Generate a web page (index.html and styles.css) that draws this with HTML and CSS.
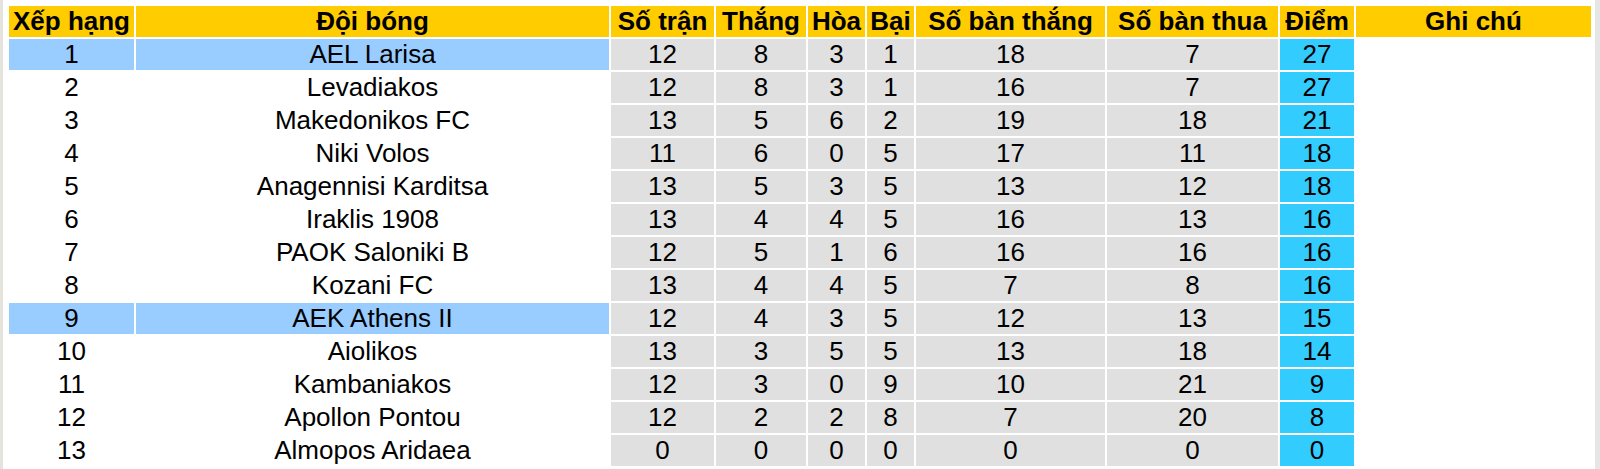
FILE: index.html
```html
<!DOCTYPE html>
<html lang="vi">
<head>
<meta charset="utf-8">
<title>Bảng xếp hạng</title>
<link rel="stylesheet" href="styles.css">
</head>
<body>
<div class="frame">
<table class="standings">
<colgroup>
<col class="c-rank"><col class="c-team"><col class="c-played"><col class="c-win"><col class="c-draw"><col class="c-loss"><col class="c-gf"><col class="c-ga"><col class="c-pts"><col class="c-note">
</colgroup>
<thead>
<tr><th>Xếp hạng</th><th>Đội bóng</th><th>Số trận</th><th>Thắng</th><th>Hòa</th><th>Bại</th><th>Số bàn thắng</th><th>Số bàn thua</th><th>Điểm</th><th>Ghi chú</th></tr>
</thead>
<tbody>
<tr class="hl"><td class="id">1</td><td class="id">AEL Larisa</td><td class="st">12</td><td class="st">8</td><td class="st">3</td><td class="st">1</td><td class="st">18</td><td class="st">7</td><td class="pts">27</td><td></td></tr>
<tr><td class="id">2</td><td class="id">Levadiakos</td><td class="st">12</td><td class="st">8</td><td class="st">3</td><td class="st">1</td><td class="st">16</td><td class="st">7</td><td class="pts">27</td><td></td></tr>
<tr><td class="id">3</td><td class="id">Makedonikos FC</td><td class="st">13</td><td class="st">5</td><td class="st">6</td><td class="st">2</td><td class="st">19</td><td class="st">18</td><td class="pts">21</td><td></td></tr>
<tr><td class="id">4</td><td class="id">Niki Volos</td><td class="st">11</td><td class="st">6</td><td class="st">0</td><td class="st">5</td><td class="st">17</td><td class="st">11</td><td class="pts">18</td><td></td></tr>
<tr><td class="id">5</td><td class="id">Anagennisi Karditsa</td><td class="st">13</td><td class="st">5</td><td class="st">3</td><td class="st">5</td><td class="st">13</td><td class="st">12</td><td class="pts">18</td><td></td></tr>
<tr><td class="id">6</td><td class="id">Iraklis 1908</td><td class="st">13</td><td class="st">4</td><td class="st">4</td><td class="st">5</td><td class="st">16</td><td class="st">13</td><td class="pts">16</td><td></td></tr>
<tr><td class="id">7</td><td class="id">PAOK Saloniki B</td><td class="st">12</td><td class="st">5</td><td class="st">1</td><td class="st">6</td><td class="st">16</td><td class="st">16</td><td class="pts">16</td><td></td></tr>
<tr><td class="id">8</td><td class="id">Kozani FC</td><td class="st">13</td><td class="st">4</td><td class="st">4</td><td class="st">5</td><td class="st">7</td><td class="st">8</td><td class="pts">16</td><td></td></tr>
<tr class="hl"><td class="id">9</td><td class="id">AEK Athens II</td><td class="st">12</td><td class="st">4</td><td class="st">3</td><td class="st">5</td><td class="st">12</td><td class="st">13</td><td class="pts">15</td><td></td></tr>
<tr><td class="id">10</td><td class="id">Aiolikos</td><td class="st">13</td><td class="st">3</td><td class="st">5</td><td class="st">5</td><td class="st">13</td><td class="st">18</td><td class="pts">14</td><td></td></tr>
<tr><td class="id">11</td><td class="id">Kambaniakos</td><td class="st">12</td><td class="st">3</td><td class="st">0</td><td class="st">9</td><td class="st">10</td><td class="st">21</td><td class="pts">9</td><td></td></tr>
<tr><td class="id">12</td><td class="id">Apollon Pontou</td><td class="st">12</td><td class="st">2</td><td class="st">2</td><td class="st">8</td><td class="st">7</td><td class="st">20</td><td class="pts">8</td><td></td></tr>
<tr><td class="id">13</td><td class="id">Almopos Aridaea</td><td class="st">0</td><td class="st">0</td><td class="st">0</td><td class="st">0</td><td class="st">0</td><td class="st">0</td><td class="pts">0</td><td></td></tr>
</tbody>
</table>
</div>
</body>
</html>
```

FILE: styles.css
```css
html, body {
  margin: 0;
  padding: 0;
  background: #ffffff;
}

.frame {
  width: 1600px;
  height: 469px;
  box-sizing: border-box;
  border-left: 3px solid #e4e4dc;
  border-right: 5px solid #e6e6e6;
  padding: 4px 2px 0 4px;
  overflow: hidden;
}

.standings {
  width: 1586px;
  table-layout: fixed;
  border-collapse: separate;
  border-spacing: 2px;
  font-family: "Liberation Sans", Arial, sans-serif;
  font-size: 26px;
  color: #000000;
}

.c-rank { width: 125px; }
.c-team { width: 473px; }
.c-played { width: 103px; }
.c-win { width: 90px; }
.c-draw { width: 57px; }
.c-loss { width: 47px; }
.c-gf { width: 189px; }
.c-ga { width: 171px; }
.c-pts { width: 74px; }
.c-note { width: 235px; }

.standings th,
.standings td {
  height: 31px;
  padding: 0;
  line-height: 31px;
  text-align: center;
  white-space: nowrap;
  overflow: hidden;
}

.standings th {
  background: #ffcc00;
  font-weight: bold;
}

.standings td.st {
  background: #e0e0e0;
}

.standings td.pts {
  background: #33ccff;
}

.standings tr.hl td.id {
  background: #99ccff;
}
```
